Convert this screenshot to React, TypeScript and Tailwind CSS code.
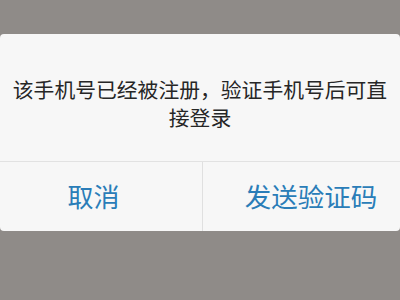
import React from 'react';

export default function App() {
  return (
    <div
      className="w-[400px] h-[300px] bg-[#8f8b88] pt-[34px] overflow-hidden"
      style={{ fontFamily: '"Noto Sans CJK SC", "Noto Sans", sans-serif' }}
    >
      <div className="w-[400px] h-[197px] bg-[#f7f7f7] rounded-[4px] flex flex-col">
        <div className="h-[127px] flex items-center justify-center pt-[11px] px-[8px]">
          <p className="text-[20.8px] leading-[28px] text-[#262626] text-center">
            该手机号已经被注册，验证手机号后可直
            <br />
            接登录
          </p>
        </div>
        <div className="h-px bg-[#e2e2e2]" />
        <div className="flex flex-1">
          <button className="w-[202px] flex items-center justify-center pr-[15px] pb-[2px] text-[26px] text-[#2a7db8]">
            取消
          </button>
          <div className="w-px bg-[#e0e0e0]" />
          <button className="flex-1 flex items-center justify-center pl-[19px] pb-[2px] text-[26.5px] text-[#2a7db8]">
            发送验证码
          </button>
        </div>
      </div>
    </div>
  );
}
